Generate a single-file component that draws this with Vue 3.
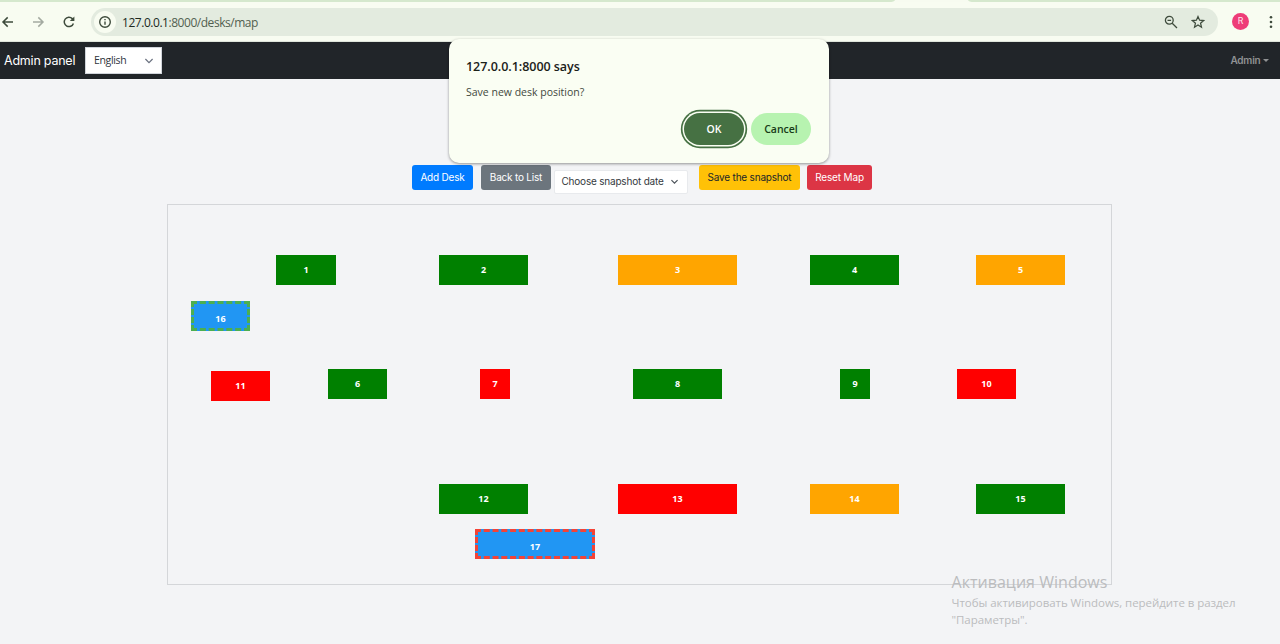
<script setup>
const desks = [
  { id: 1, x: 276, y: 255, w: 60, color: 'green' },
  { id: 2, x: 439, y: 255, w: 89, color: 'green' },
  { id: 3, x: 618, y: 255, w: 119, color: 'orange' },
  { id: 4, x: 810, y: 255, w: 89, color: 'green' },
  { id: 5, x: 976, y: 255, w: 89, color: 'orange' },
  { id: 16, x: 191, y: 301, w: 59, color: 'blue', outline: 'free' },
  { id: 11, x: 211, y: 371, w: 59, color: 'red' },
  { id: 6, x: 328, y: 369, w: 59, color: 'green' },
  { id: 7, x: 480, y: 369, w: 30, color: 'red' },
  { id: 8, x: 633, y: 369, w: 89, color: 'green' },
  { id: 9, x: 840, y: 369, w: 30, color: 'green' },
  { id: 10, x: 957, y: 369, w: 59, color: 'red' },
  { id: 12, x: 439, y: 484, w: 89, color: 'green' },
  { id: 13, x: 618, y: 484, w: 119, color: 'red' },
  { id: 14, x: 810, y: 484, w: 89, color: 'orange' },
  { id: 15, x: 976, y: 484, w: 89, color: 'green' },
  { id: 17, x: 475, y: 529, w: 120, color: 'blue', outline: 'busy' },
]
const mapLeft = 168
const mapTop = 205
</script>

<template>
  <div class="screen">
    <div class="tabs"><i class="tab-left"></i><i class="tab-right"></i></div>
    <header class="browser">
      <svg class="nav-icon" viewBox="0 0 16 16"><path d="M13 8H3.2M7.7 3.4 3 8l4.7 4.6" /></svg>
      <svg class="nav-icon forward" viewBox="0 0 16 16"><path d="M3 8h9.8M8.3 3.4 13 8l-4.700 4.600" /></svg>
      <svg class="nav-icon reload" viewBox="0 0 16 16"><path d="M12.400 9.400A4.700 4.700 0 1 1 11.300 4.600L12.700 6" /><path class="solid" d="M13.400 2.500v4.600H8.800z" /></svg>
      <div class="address">
        <span class="info">
          <svg viewBox="0 0 14 14"><circle cx="7" cy="7" r="5.300" /><path d="M7 6.500v3.300M7 4v1.300" /></svg>
        </span>
        <span class="url"><b>127.0.0.1</b>:8000/desks/map</span>
        <svg class="lens" viewBox="0 0 14 14"><circle cx="5.300" cy="5.300" r="3.900" /><path d="M8.200 8.200 13 13M3.500 5.300h3.600" /></svg>
        <svg class="star" viewBox="0 0 14 14"><path d="m7 1.500 1.600 3.700 4 .35-3.050 2.650.95 3.950L7 10.050 3.500 12.150l.95-3.950L1.400 5.550l4-.35z" /></svg>
      </div>
      <span class="avatar">R</span>
      <svg class="dots" viewBox="0 0 4 14"><circle cx="2" cy="2.200" r="1.300" /><circle cx="2" cy="7" r="1.300" /><circle cx="2" cy="11.800" r="1.300" /></svg>
    </header>

    <nav class="navbar">
      <span class="brand">Admin panel</span>
      <div class="language"><span>English</span><svg viewBox="0 0 10 6"><path d="m1.400 1 3.600 3.600L8.600 1" /></svg></div>
      <span class="account">Admin<i></i></span>
    </nav>

    <main>
      <div class="actions">
        <button class="btn add"><span>Add Desk</span></button>
        <button class="btn back"><span>Back to List</span></button>
        <div class="snapshot"><span>Choose snapshot date</span><svg viewBox="0 0 10 6"><path d="m1.600 1 3.400 3.400L8.400 1" /></svg></div>
        <button class="btn save"><span>Save the snapshot</span></button>
        <button class="btn reset"><span>Reset Map</span></button>
      </div>
      <section class="map">
        <div
          v-for="desk in desks"
          :key="desk.id"
          class="desk"
          :class="[desk.color, desk.outline]"
          :style="{ left: desk.x - mapLeft + 'px', top: desk.y - mapTop + 'px', width: desk.w + 'px' }"
        >{{ desk.id }}</div>
      </section>
    </main>

    <div class="dialog">
      <h1><span>127.0.0.1:8000 says</span></h1>
      <p><span>Save new desk position?</span></p>
      <div class="choices">
        <button class="ok">OK</button>
        <button class="cancel">Cancel</button>
      </div>
    </div>

    <aside class="watermark">
      <div class="wm-title"><span>Активация Windows</span></div>
      <div class="wm-line"><span>Чтобы активировать Windows, перейдите в раздел</span></div>
      <div class="wm-line"><span>"Параметры".</span></div>
    </aside>
  </div>
</template>

<style>
body { margin: 0; overflow: hidden; background: #f3f4f6; }
</style>

<style scoped>
* { box-sizing: border-box; }
.screen { position: relative; width: 1280px; height: 644px; overflow: hidden; background: #f3f4f6; font-family: "Open Sans", "Noto Sans", sans-serif; white-space: nowrap; }
svg { display: block; fill: none; stroke: #3e4b3c; stroke-width: 1.5; flex: none; }
button { border: 0; padding: 0; margin: 0; font-family: inherit; white-space: nowrap; }

.tabs { display: flex; justify-content: space-between; height: 2px; background: #f7fbf0; }
.tab-left { width: 895px; background: #d5e8cd; border-bottom-right-radius: 6px 2px; }
.tab-right { width: 312px; background: #d5e8cd; border-bottom-left-radius: 6px 2px; }

.browser { display: flex; align-items: center; height: 40px; background: #f8fcf1; border-bottom: 1px solid #dfe5db; }
.nav-icon { width: 16px; height: 16px; }
.forward { margin-left: 14px; stroke: #a4aaa1; }
.reload { margin-left: 15px; }
.solid { fill: #3e4b3c; stroke: none; }
.address { display: flex; align-items: center; width: 1127px; height: 28px; margin-left: 14px; padding-left: 3px; border-radius: 14px; background: #e3ebdf; }
.info { display: flex; align-items: center; justify-content: center; width: 22px; height: 22px; border-radius: 50%; background: #f8fcf1; }
.info svg { width: 14px; height: 14px; stroke-width: 1.4; }
.url { margin: 1px 0 0 6px; width: 1036px; color: #52604f; font-size: 12px; letter-spacing: -.46px; }
.url b { font-weight: 400; color: #20291e; }
.lens { width: 14px; height: 14px; margin-left: 6px; stroke-width: 1.300; }
.star { width: 14px; height: 14px; margin-left: 13px; stroke-width: 1.200; }
.avatar { width: 17px; height: 17px; margin-left: 14px; border-radius: 50%; background: #ee3c78; color: #ffe5ed; font: 9px/17px Roboto, sans-serif; text-align: center; }
.dots { width: 4px; height: 14px; margin-left: 20px; fill: #3e4b3c; stroke: none; }

.navbar { display: flex; align-items: center; height: 37px; padding: 0 11px 0 4px; background: #212529; }
.brand { width: 81px; color: #fff; font-family: Inter, sans-serif; font-size: 12.500px; letter-spacing: -.22px; }
.language { display: flex; align-items: center; justify-content: space-between; width: 77px; height: 27px; padding: 0 7px 0 8px; border: 1px solid #d1d5db; background: #fff; color: #30353c; font-size: 10.500px; letter-spacing: -.35px; }
.language span { margin-top: -1px; }
.language svg { width: 10px; height: 6px; stroke: #6b7280; stroke-width: 1.200; }
.account { display: flex; align-items: center; gap: 2.500px; margin: -1px 0 0 auto; color: #909294; font: 600 10px Inter, sans-serif; letter-spacing: -.2px; }
.account i { border: 3px solid transparent; border-top-color: #909294; border-bottom: 0; }

main { display: flex; flex-direction: column; align-items: center; padding-top: 86px; font-family: Inter, sans-serif; }
.actions { display: flex; align-items: flex-start; width: 460px; height: 39px; margin-left: 4px; }
.btn { height: 25px; border-radius: 3px; color: #fff; font-size: 10px; line-height: 25px; letter-spacing: -.2px; }
.add { width: 61px; background: #007bff; }
.back { width: 70px; margin-left: 8px; background: #6c757d; }
.snapshot { display: flex; align-items: center; justify-content: space-between; width: 134px; height: 24px; margin: 5px 0 0 2.500px; padding: 0 8px 0 7px; border: 1px solid #e8eaed; border-radius: 2px; background: #fff; color: #343a40; font-size: 10px; letter-spacing: -.2px; }
.snapshot span { margin-top: -2px; }
.snapshot svg { width: 9px; height: 6px; stroke: #495057; stroke-width: 1.300; }
.save { width: 101px; margin-left: 11.500px; background: #ffc107; color: #212529; }
.reset { width: 65px; margin-left: 7px; letter-spacing: -.15px; background: #dc3545; }
.map { position: relative; width: 945px; height: 381px; margin-right: 1px; border: 1px solid #d4d6d9; }
.desk { position: absolute; height: 30px; color: #fff; font: 700 9px/29px "Open Sans", sans-serif; text-align: center; }
.green { background: #008000; }
.red { background: #f00; }
.orange { background: #ffa500; }
.blue { background: #2196f3; }
.free { border: 3px dashed #4caf50; line-height: 30px; }
.busy { border: 3px dashed #f44336; line-height: 30px; }

.dialog { position: absolute; left: 449px; top: 39px; width: 380px; height: 124px; padding: 18px 18px 0 17px; border-radius: 10px; background: #fafef3; box-shadow: 0 1px 3px rgba(0, 0, 0, .4); }
h1 { margin: 0; color: #1b2119; font-size: 12.500px; line-height: 19px; font-weight: 600; letter-spacing: -.04px; }
p { margin: 8px 0 0; color: #424940; font-size: 10.500px; line-height: 17px; }
.choices { display: flex; justify-content: flex-end; gap: 7px; margin-top: 12px; }
.choices button { width: 60px; height: 32px; border-radius: 16px; font-size: 10.500px; font-weight: 600; line-height: 32px; }
.choices .ok { background: #467143; color: #fff; box-shadow: 0 0 0 1.500px #fafef3, 0 0 0 3.200px #467143; }
.choices .cancel { background: #b7f3b0; color: #183b17; }

.watermark { position: absolute; left: 951.500px; top: 570px; color: #bbbcbe; }
.wm-title { font-size: 16px; line-height: 24px; letter-spacing: .03px; }
.wm-line { font-size: 11.500px; line-height: 17px; letter-spacing: -.05px; }
</style>
